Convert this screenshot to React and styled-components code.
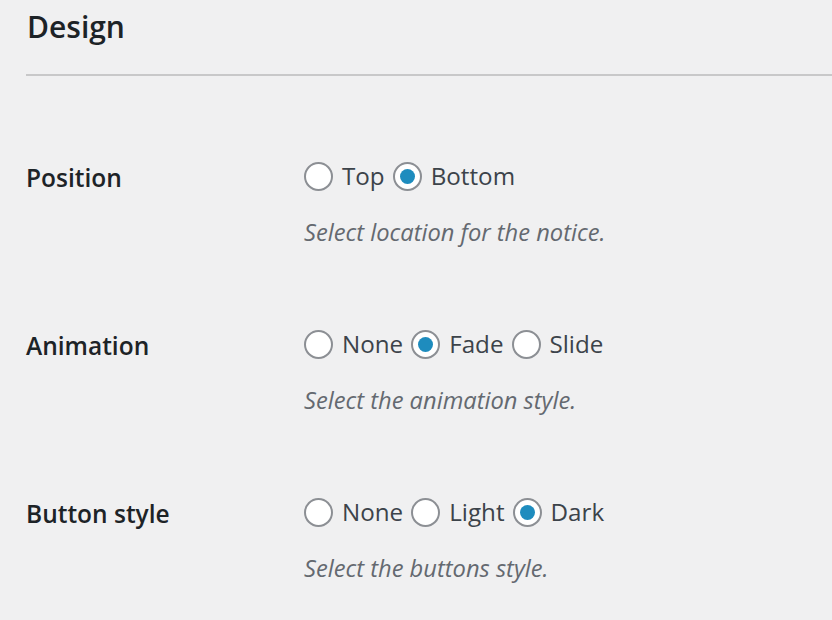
import React from "react";
import styled, { createGlobalStyle } from "styled-components";

const Global = createGlobalStyle`
  html, body { margin: 0; padding: 0; background: #f0f0f1; }
  body { font-family: "Open Sans", "Noto Sans", sans-serif; color: #1d2327; }
`;

const Page = styled.div`
  padding-left: 26px;
  overflow: hidden;
  height: 620px;
`;

const Heading = styled.h2`
  margin: 0;
  padding-top: 7px;
  font-size: 30px;
  line-height: 40px;
  font-weight: 600;
  color: #1d2327;
  padding-left: 1px;
`;

const Divider = styled.hr`
  margin: 27px 0 54px 0;
  border: 0;
  height: 2px;
  background: #c8c8c9;
`;

const Row = styled.div`
  display: flex;
  padding: 28px 0 50px 0;
`;

const Label = styled.div`
  width: 278px;
  flex: none;
  margin-top: 2px;
  font-size: 24.5px;
  line-height: 36px;
  font-weight: 600;
  color: #1d2327;
`;

const Field = styled.div`
  display: flex;
  flex-direction: column;
`;

const Options = styled.div`
  display: flex;
  align-items: center;
  height: 36px;
  gap: 8px;
`;

const Option = styled.label`
  display: inline-flex;
  align-items: center;
  gap: 9px;
  font-size: 24.2px;
  line-height: 36px;
  color: #3c434a;
`;

const Radio = styled.span`
  box-sizing: border-box;
  width: 29px;
  height: 29px;
  border-radius: 50%;
  border: 2px solid #8c8f94;
  background: #fff;
  display: inline-flex;
  align-items: center;
  justify-content: center;
  &::after {
    content: "";
    width: 15px;
    height: 15px;
    border-radius: 50%;
    background: ${(p) => (p.$checked ? "#1e8cbe" : "transparent")};
  }
`;

const Description = styled.p`
  margin: 22px 0 0 0;
  font-size: 23.7px;
  line-height: 32px;
  font-style: italic;
  color: #646970;
`;

const settings = [
  { label: "Position", options: ["Top", "Bottom"], checked: "Bottom", desc: "Select location for the notice." },
  { label: "Animation", options: ["None", "Fade", "Slide"], checked: "Fade", desc: "Select the animation style." },
  { label: "Button style", options: ["None", "Light", "Dark"], checked: "Dark", desc: "Select the buttons style." },
];

export default function App() {
  return (
    <>
      <Global />
      <Page>
        <Heading>Design</Heading>
        <Divider />
        {settings.map((s) => (
          <Row key={s.label}>
            <Label>{s.label}</Label>
            <Field>
              <Options>
                {s.options.map((o) => (
                  <Option key={o}>
                    <Radio $checked={o === s.checked} />
                    {o}
                  </Option>
                ))}
              </Options>
              <Description>{s.desc}</Description>
            </Field>
          </Row>
        ))}
      </Page>
    </>
  );
}
